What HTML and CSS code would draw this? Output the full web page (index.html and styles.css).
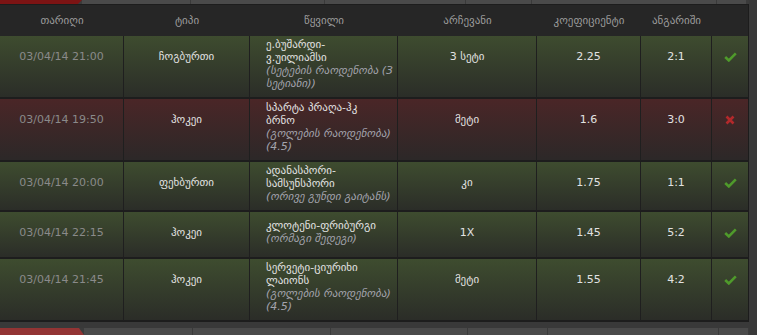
FILE: index.html
```html
<!DOCTYPE html>
<html lang="ka">
<head>
<meta charset="utf-8">
<title>ფსონები</title>
<link rel="stylesheet" href="styles.css">
</head>
<body>
<div class="tabs tabs-top">
  <div class="tab tab-active"></div>
  <div class="tab w109"></div>
  <div class="tab w134"></div>
  <div class="tab w141"></div>
  <div class="tab w66"></div>
  <div class="tab w185"></div>
  <div class="tab w29"></div>
</div>
<div class="panel">
  <table class="bets">
    <thead>
      <tr>
        <th class="c-date">თარიღი</th>
        <th class="c-type">ტიპი</th>
        <th class="c-pair">წყვილი</th>
        <th class="c-pick">არჩევანი</th>
        <th class="c-coef">კოეფიციენტი</th>
        <th class="c-score">ანგარიში</th>
        <th class="c-res"></th>
      </tr>
    </thead>
    <tbody>
      <tr class="win">
        <td class="date">03/04/14 21:00</td>
        <td class="val">ჩოგბურთი</td>
        <td class="pair">ე.ბუშარდი-<br>ვ.უილიამსი<br><span class="note">(სეტების რაოდენობა (3<br>სეტიანი))</span></td>
        <td class="val">3 სეტი</td>
        <td class="val">2.25</td>
        <td class="val">2:1</td>
        <td class="val res"><svg class="ico" viewBox="0 0 13 10" width="13" height="10"><polyline points="1.2,5 4.8,8.4 11.8,1.4" fill="none" stroke="#4f9a2b" stroke-width="2.6"/></svg></td>
      </tr>
      <tr class="lose">
        <td class="date">03/04/14 19:50</td>
        <td class="val">ჰოკეი</td>
        <td class="pair">სპარტა პრაღა-ჰკ<br>ბრნო<br><span class="note">(გოლების რაოდენობა)<br>(4.5)</span></td>
        <td class="val">მეტი</td>
        <td class="val">1.6</td>
        <td class="val">3:0</td>
        <td class="val res"><svg class="ico" viewBox="0 0 10 10" width="10" height="10"><path d="M1.5 1.5L8.5 8.5M8.5 1.5L1.5 8.5" stroke="#b3292b" stroke-width="2.6"/></svg></td>
      </tr>
      <tr class="win">
        <td class="date">03/04/14 20:00</td>
        <td class="val">ფეხბურთი</td>
        <td class="pair">ადანასპორი-<br>სამსუნსპორი<br><span class="note">(ორივე გუნდი გაიტანს)</span></td>
        <td class="val">კი</td>
        <td class="val">1.75</td>
        <td class="val">1:1</td>
        <td class="val res"><svg class="ico" viewBox="0 0 13 10" width="13" height="10"><polyline points="1.2,5 4.8,8.4 11.8,1.4" fill="none" stroke="#4f9a2b" stroke-width="2.6"/></svg></td>
      </tr>
      <tr class="win">
        <td class="date">03/04/14 22:15</td>
        <td class="val">ჰოკეი</td>
        <td class="pair">კლოტენი-ფრიბურგი<br><span class="note">(ორმაგი შედეგი)</span></td>
        <td class="val">1X</td>
        <td class="val">1.45</td>
        <td class="val">5:2</td>
        <td class="val res"><svg class="ico" viewBox="0 0 13 10" width="13" height="10"><polyline points="1.2,5 4.8,8.4 11.8,1.4" fill="none" stroke="#4f9a2b" stroke-width="2.6"/></svg></td>
      </tr>
      <tr class="win">
        <td class="date">03/04/14 21:45</td>
        <td class="val">ჰოკეი</td>
        <td class="pair">სერვეტი-ციურიხი<br>ლაიონს<br><span class="note">(გოლების რაოდენობა)<br>(4.5)</span></td>
        <td class="val">მეტი</td>
        <td class="val">1.55</td>
        <td class="val">4:2</td>
        <td class="val res"><svg class="ico" viewBox="0 0 13 10" width="13" height="10"><polyline points="1.2,5 4.8,8.4 11.8,1.4" fill="none" stroke="#4f9a2b" stroke-width="2.6"/></svg></td>
      </tr>
    </tbody>
  </table>
</div>
<div class="tabs tabs-bottom">
  <div class="tab tab-active"></div>
  <div class="tab w109"></div>
  <div class="tab w138"></div>
  <div class="tab w137"></div>
  <div class="tab w80"></div>
  <div class="tab w171"></div>
  <div class="tab w29"></div>
</div>
</body>
</html>
```

FILE: styles.css
```css
html, body {
  margin: 0;
  padding: 0;
}
body {
  background: #393939;
  font-family: "DejaVu Sans", "Noto Sans", sans-serif;
  font-size: 11px;
  line-height: 13px;
  width: 757px;
  height: 335px;
  overflow: hidden;
}

/* tab strips (parts of neighbouring panels) */
.tabs {
  display: flex;
  width: 749px;
  background: #3b3b3b;
}
.tabs-top { height: 4px; }
.tabs-bottom { height: 7px; margin-top: 6px; }
.tab {
  background: #4a4a4a;
  border-right: 1px solid #3a3a3a;
  flex: none;
}
.tab-active {
  width: 82px;
  background: #7c1414;
  clip-path: polygon(0 0, 100% 0, 95% 100%, 0 100%);
  border-right: 0;
}
.tabs-bottom .tab-active {
  width: 84px;
  background: #933434;
  clip-path: polygon(0 0, 94% 0, 100% 100%, 0 100%);
}
.w109 { width: 108px; }
.w134 { width: 133px; }
.w141 { width: 140px; }
.w66 { width: 65px; }
.w185 { width: 184px; }
.w29 { width: 29px; border-right: 0; }
.w138 { width: 137px; }
.w137 { width: 136px; }
.w80 { width: 79px; }
.w171 { width: 170px; }

/* panel */
.panel {
  width: 748px;
  border-top: 1px solid #1d1d1d;
  border-right: 1px solid #1c1c1c;
  background: #262626;
}
.bets {
  width: 748px;
  table-layout: fixed;
  border-collapse: separate;
  border-spacing: 0;
}
.bets th {
  height: 31px;
  padding: 0;
  box-sizing: border-box;
  font-weight: normal;
  color: #9b9b9b;
  text-align: center;
  vertical-align: middle;
  background: #262626;
}
.c-date { width: 124px; }
.c-type { width: 126px; }
.c-pair { width: 148px; }
.c-pick { width: 139px; }
.c-coef { width: 104px; }
.c-score { width: 71px; }
.c-res { width: 36px; }

.bets tbody tr { height: 47px; }
.bets td {
  box-sizing: border-box;
  border-right: 1px solid #1f1f1f;
  border-bottom: 2px solid #1d1d1d;
  vertical-align: top;
  padding: 14px 0 0;
  text-align: center;
  color: #e2e2e2;
}
.bets td.res { border-right: 0; }
.win td { background: linear-gradient(#3e4c2f, #2b2d28); }
.lose td { background: linear-gradient(#4a2627, #2c2828); }

.bets td.date { color: #8a8a8a; }
.bets td.pair {
  vertical-align: middle;
  text-align: left;
  padding: 2px 0 7px 16px;
}
.note {
  font-style: italic;
  color: #a3a3ad;
}
.ico { display: block; margin: 0 auto; }
.bets td.res { padding-top: 16px; }
```
